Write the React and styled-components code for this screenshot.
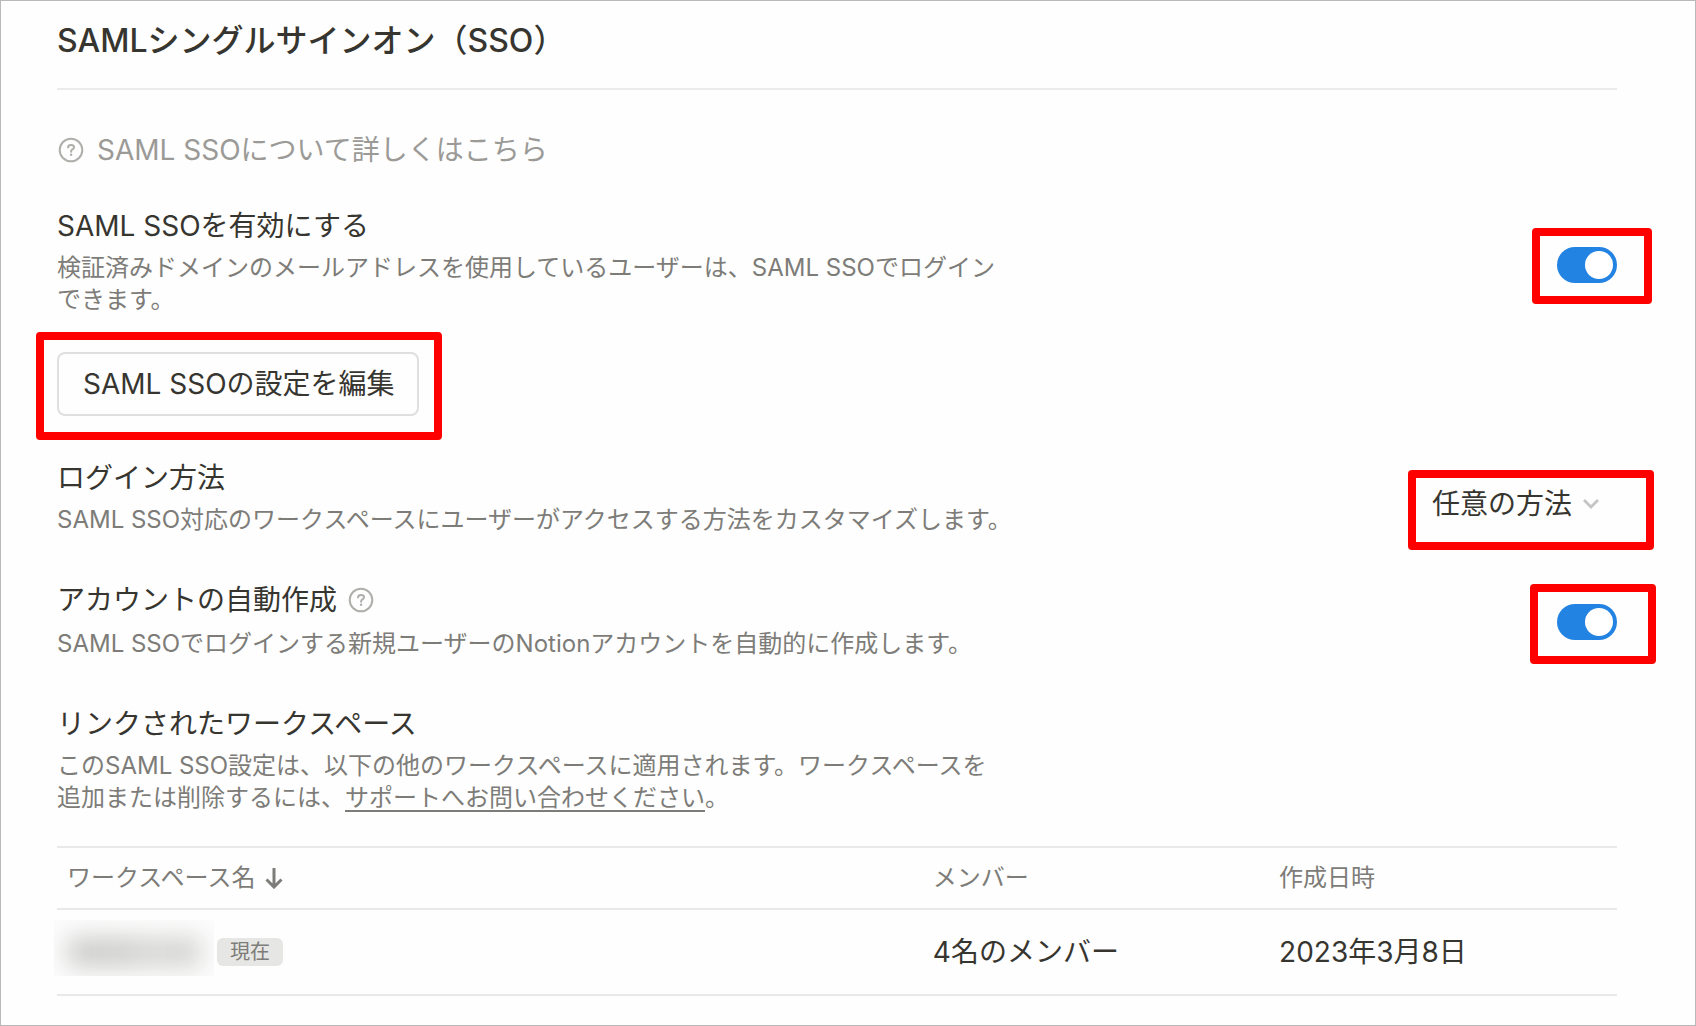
import React, { useState } from "react";
import styled, { createGlobalStyle } from "styled-components";

const WORKSPACES = [{ id: 1, members: "4名のメンバー", createdAt: "2023年3月8日" }];

function HelpIcon() {
  return (
    <HelpSvg viewBox="-1 -1 28 28" aria-hidden="true">
      <circle cx="13" cy="13" r="11.3" />
      <path d="M10 10.4c.1-1.6 1.3-2.5 3-2.5s3 .9 3 2.3c0 1.1-.6 1.7-1.5 2.2-1 .6-1.4 1-1.4 1.9v.4" />
      <circle className="dot" cx="13.1" cy="17.7" r="1.2" />
    </HelpSvg>
  );
}

function App() {
  const [ssoEnabled, setSsoEnabled] = useState(true);
  const [autoCreate, setAutoCreate] = useState(true);
  const [method, setMethod] = useState("any");

  return (
    <Page>
      <GlobalStyle />
      <Title>SAMLシングルサインオン（SSO）</Title>
      <LearnMore href="#learn-more">
        <HelpIcon />
        SAML SSOについて詳しくはこちら
      </LearnMore>

      <Row $gap={36}>
        <RowText>
          <Label htmlFor="sso-enabled">SAML SSOを有効にする</Label>
          <Description>
            検証済みドメインのメールアドレスを使用しているユーザーは、SAML SSOでログイン
            <br />
            できます。
          </Description>
        </RowText>
        <Highlight $inset="-19px -35px -21px -25px" $drop={8}>
          <Toggle
            id="sso-enabled"
            checked={ssoEnabled}
            onChange={() => setSsoEnabled((prev) => !prev)}
          />
        </Highlight>
      </Row>

      <Row $gap={36}>
        <Highlight $inset="-20px -23px -24px -21px">
          <Button type="button">SAML SSOの設定を編集</Button>
        </Highlight>
      </Row>

      <Row $gap={42}>
        <RowText>
          <Label htmlFor="login-method">ログイン方法</Label>
          <Description>
            SAML SSO対応のワークスペースにユーザーがアクセスする方法をカスタマイズします。
          </Description>
        </RowText>
        <Highlight $inset="-12px -37px -24px -24px" $drop={14}>
          <Dropdown>
            <Select
              id="login-method"
              value={method}
              onChange={(e) => setMethod(e.target.value)}
            >
              <option value="any">任意の方法</option>
              <option value="saml">SAML SSO</option>
            </Select>
            <Chevron viewBox="0 0 16 10" aria-hidden="true">
              <path d="M1 1l7 7 7-7" />
            </Chevron>
          </Dropdown>
        </Highlight>
      </Row>

      <Row $gap={42}>
        <RowText>
          <LabelWithHelp>
            <Label htmlFor="auto-create">アカウントの自動作成</Label>
            <HelpIcon />
          </LabelWithHelp>
          <Description>
            SAML SSOでログインする新規ユーザーのNotionアカウントを自動的に作成します。
          </Description>
        </RowText>
        <Highlight $inset="-20px -39px -24px -27px" $drop={6}>
          <Toggle
            id="auto-create"
            checked={autoCreate}
            onChange={() => setAutoCreate((prev) => !prev)}
          />
        </Highlight>
      </Row>

      <Row $gap={44}>
        <RowText>
          <SubHeading>リンクされたワークスペース</SubHeading>
          <Description>
            このSAML SSO設定は、以下の他のワークスペースに適用されます。ワークスペースを
            <br />
            追加または削除するには、<a href="#support">サポートへお問い合わせください</a>。
          </Description>
        </RowText>
      </Row>

      <Table>
        <thead>
          <tr>
            <Th $width="55.5%" scope="col">
              <SortLabel>
                ワークスペース名
                <SortArrow viewBox="0 0 18 22" aria-hidden="true">
                  <path d="M9 1v18M1.5 12.5L9 20l7.5-7.5" />
                </SortArrow>
              </SortLabel>
            </Th>
            <Th $width="22.2%" scope="col">メンバー</Th>
            <Th scope="col">作成日時</Th>
          </tr>
        </thead>
        <tbody>
          {WORKSPACES.map((workspace) => (
            <tr key={workspace.id}>
              <Td>
                <NameCell>
                  <HiddenName />
                  <Badge>現在</Badge>
                </NameCell>
              </Td>
              <Td>{workspace.members}</Td>
              <Td>{workspace.createdAt}</Td>
            </tr>
          ))}
        </tbody>
      </Table>
    </Page>
  );
}

const GlobalStyle = createGlobalStyle`
  * {
    box-sizing: border-box;
  }
  body {
    margin: 0;
    background: #fefefe;
    color: #37352f;
    font-family: Inter, "Noto Sans CJK JP", sans-serif;
    font-size: 28px;
  }
  button, select {
    font: inherit;
    color: inherit;
  }
`;

const Page = styled.main`
  min-height: 100vh;
  padding: 16px 78px 29px 56px;
  border: 1px solid #b9b9b9;
`;

const Title = styled.h1`
  margin: 0;
  padding-bottom: 23px;
  border-bottom: 2px solid #ebebea;
  font-size: 32px;
  font-weight: 500;
  line-height: 48px;
`;

const LearnMore = styled.a`
  display: flex;
  align-items: center;
  gap: 12px;
  width: fit-content;
  margin-top: 40px;
  color: #9b9a97;
  line-height: 40px;
  text-decoration: none;
`;

const HelpSvg = styled.svg`
  flex: none;
  width: 28px;
  height: 28px;
  fill: none;
  stroke: #afaeab;
  stroke-width: 2;
  stroke-linecap: round;
  .dot {
    fill: #afaeab;
    stroke: none;
  }
`;

const Row = styled.div`
  display: flex;
  align-items: center;
  margin-top: ${(props) => props.$gap}px;
`;

const RowText = styled.div`
  flex: 1;
`;

const Label = styled.label`
  display: block;
  line-height: 40px;
`;

const LabelWithHelp = styled.div`
  display: flex;
  align-items: center;
  gap: 10px;
  height: 44px;
`;

const SubHeading = styled.h2`
  margin: 0;
  font-size: 28px;
  font-weight: 400;
  line-height: 40px;
`;

const Description = styled.p`
  margin: 6px 0 0;
  color: #7d7c78;
  font-size: 24px;
  line-height: 32px;
  a {
    color: inherit;
    text-underline-offset: 4px;
  }
`;

/* red marker frame drawn over the control */
const Highlight = styled.div`
  position: relative;
  margin-top: ${(props) => props.$drop || 0}px;
  &::after {
    content: "";
    position: absolute;
    inset: ${(props) => props.$inset};
    border: 8px solid #ff0000;
    border-radius: 4px;
    pointer-events: none;
  }
`;

const Toggle = styled.input.attrs({ type: "checkbox", role: "switch" })`
  appearance: none;
  display: flex;
  justify-content: flex-end;
  width: 60px;
  height: 36px;
  margin: 0;
  padding: 4px;
  border-radius: 18px;
  background: #2383e2;
  cursor: pointer;
  &::before {
    content: "";
    width: 28px;
    height: 28px;
    border-radius: 50%;
    background: #fff;
  }
  &:not(:checked) {
    justify-content: flex-start;
    background: #c8c7c4;
  }
`;

const Button = styled.button`
  display: block;
  height: 64px;
  padding: 0 22px 4px 24px;
  border: 2px solid #dfdfde;
  border-radius: 8px;
  background: transparent;
  cursor: pointer;
`;

const Dropdown = styled.div`
  display: grid;
  align-items: center;
`;

const Select = styled.select`
  grid-area: 1 / 1;
  appearance: none;
  height: 44px;
  padding: 0 41px 0 0;
  border: 0;
  background: transparent;
  cursor: pointer;
`;

const Chevron = styled.svg`
  grid-area: 1 / 1;
  justify-self: end;
  width: 16px;
  height: 10px;
  margin-right: 18px;
  fill: none;
  stroke: #c4c4c2;
  stroke-width: 2.8;
  pointer-events: none;
`;

const Table = styled.table`
  width: 100%;
  margin-top: 32px;
  border-top: 2px solid #e9e9e8;
  border-spacing: 0;
  table-layout: fixed;
`;

const Th = styled.th`
  width: ${(props) => props.$width || "auto"};
  height: 62px;
  padding: 0 10px;
  border-bottom: 2px solid #e9e9e8;
  color: #7d7c78;
  font-size: 24px;
  font-weight: 400;
  line-height: 32px;
  text-align: left;
`;

const SortLabel = styled.span`
  display: flex;
  align-items: center;
  gap: 10px;
`;

const SortArrow = styled.svg`
  width: 18px;
  height: 22px;
  fill: none;
  stroke: #7d7c78;
  stroke-width: 3;
`;

const Td = styled.td`
  height: 86px;
  padding: 0 10px;
  border-bottom: 2px solid #e9e9e8;
  line-height: 40px;
`;

const NameCell = styled.div`
  display: flex;
  align-items: center;
  gap: 3px;
  margin-left: -13px;
`;

const HiddenName = styled.span`
  width: 160px;
  height: 56px;
  margin-bottom: 8px;
  padding: 18px 14px 10px;
  overflow: hidden;
  background: #fcfcfc;
  &::before {
    content: "";
    display: block;
    height: 28px;
    background: linear-gradient(90deg, #cacac8, #cacac8 40%, #d4d4d2 60%, #d0d0ce);
    filter: blur(12px);
  }
`;

const Badge = styled.span`
  padding: 0 13px;
  border-radius: 6px;
  background: #e6e6e4;
  color: #7d7c78;
  font-size: 20px;
  line-height: 28px;
`;

export default App;
